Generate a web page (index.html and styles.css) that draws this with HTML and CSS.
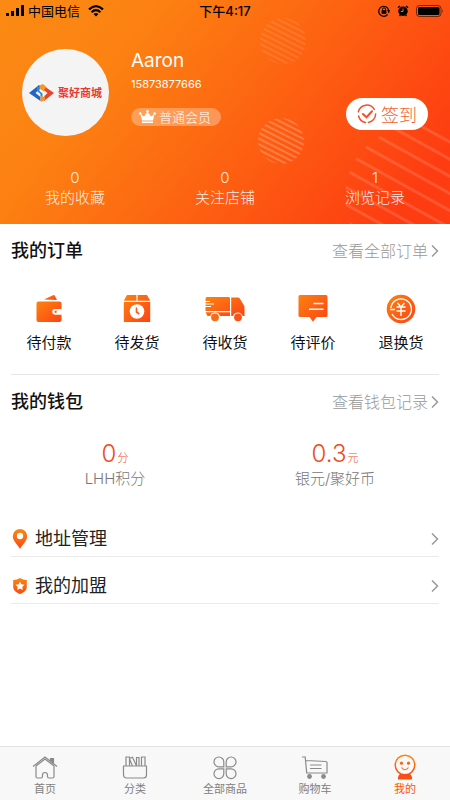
FILE: index.html
```html
<!DOCTYPE html>
<html lang="zh-CN">
<head>
<meta charset="utf-8">
<meta name="viewport" content="width=device-width, initial-scale=1">
<title>我的</title>
<link rel="stylesheet" href="styles.css">
</head>
<body>
<svg class="defs" width="0" height="0" aria-hidden="true">
  <defs>
    <linearGradient id="warm" x1="0" y1="0" x2="1" y2="1">
      <stop offset="0" stop-color="#fd820f"/>
      <stop offset="1" stop-color="#fb4415"/>
    </linearGradient>
    <linearGradient id="warmDown" x1="0" y1="0" x2="0" y2="1">
      <stop offset="0" stop-color="#fd860f"/>
      <stop offset="1" stop-color="#fb4a12"/>
    </linearGradient>
  </defs>
</svg>
<header class="hero">
  <svg class="hero-art" viewBox="0 0 450 224" preserveAspectRatio="xMaxYMin slice" aria-hidden="true">
    <defs>
      <pattern id="fine" width="5" height="5" patternUnits="userSpaceOnUse" patternTransform="rotate(27)">
        <rect width="5" height="2" fill="#fff"/>
      </pattern>
      <pattern id="bold" width="15" height="15" patternUnits="userSpaceOnUse" patternTransform="translate(0 11) rotate(29)">
        <rect width="15" height="3" fill="#fff"/>
      </pattern>
    </defs>
    <circle cx="283" cy="41" r="23" fill="url(#fine)" opacity=".1"/>
    <circle cx="281" cy="141" r="23" fill="url(#fine)" opacity=".22"/>
    <circle cx="416" cy="197" r="71" fill="url(#bold)" opacity=".13"/>
  </svg>
  <div class="status">
    <div class="status-side">
      <svg width="18" height="12" viewBox="0 0 18 12" aria-hidden="true"><path d="M0 8h3v3H0zM5 6h3v5H5zM10 3h3v8h-3zM15 0h3v11h-3z"/></svg>
      <span>中国电信</span>
      <svg class="wifi" width="16" height="12" viewBox="0 0 16 12" aria-hidden="true"><g fill="none" stroke="#000" stroke-width="2.2"><path d="M1 4.4Q8-2 15 4.4"/><path d="M3.6 7.2Q8 3.2 12.4 7.2"/></g><path d="M8 11.5 5.6 9Q8 7 10.4 9z"/></svg>
    </div>
    <span class="time">下午4:17</span>
    <div class="status-side status-right">
      <svg width="12" height="12" viewBox="0 0 12 12" aria-hidden="true"><path d="M10.6 5A5 5 0 1 0 9.600 9.500M10.800 5.500V8" fill="none" stroke="#000" stroke-width="1.200"/><path d="M9 5h3l-1.500 2.500z"/><rect x="3.600" y="5.200" width="4.800" height="3.600"/><path d="M4.500 5.500V4.300a1.500 1.500 0 0 1 3 0v1.200" fill="none" stroke="#000"/></svg>
      <svg width="12" height="12" viewBox="0 0 12 12" aria-hidden="true"><circle cx="6" cy="6.300" r="4.700"/><path d="M1 2.800 3 1M11 2.800 9 1M2.500 11l1-1M9.500 11l-1-1" stroke="#000" stroke-width="1.500"/><path d="M6 3.500v3H3.800" fill="none" stroke="#fb7010"/></svg>
      <svg width="28" height="12" viewBox="0 0 28 12" aria-hidden="true"><rect x=".5" y=".5" width="24.500" height="11" rx="3" fill="none" stroke="#000" stroke-opacity=".55"/><rect x="2" y="2" width="21.500" height="8" rx="1.500"/><path d="M26 4q1.600 2 0 4z" fill-opacity=".6"/></svg>
    </div>
  </div>
  <div class="profile">
    <div class="avatar">
      <svg width="25" height="18" viewBox="0 0 25 18" aria-hidden="true">
        <path d="M0 9 10 1l2.500 2L6.500 9l5 4v4z" fill="#2465c4"/>
        <path d="M25 9 15 17l-2.500-2L18.500 9l-5-4V1z" fill="#e8432c"/>
        <path d="M8 3h2.500v4l3 2.500v4l-2-1V10L8 7z" fill="#1f8de0"/>
        <path d="M10.500 1.500 14 0l4 3.500-2.500 1.500V8l-2-1.500-3-2z" fill="#f79620"/>
        <path d="M11.500 17v-5.500l3.500 2 1-2.500v4.500L12 18z" fill="#f79620"/>
      </svg>
      <span>聚好商城</span>
    </div>
    <div class="identity">
      <h1>Aaron</h1>
      <p>15873877666</p>
      <span class="level">
        <svg width="17" height="14" viewBox="0 0 17 14" aria-hidden="true"><g fill="#fff"><path d="M1.500 4 5 6.500 8.500 1.500 12 6.500 15.500 4 14 10.500H3zM3 11.500h11v1.500H3z"/><circle cx="1.300" cy="3.500" r="1.200"/><circle cx="8.500" cy="1.300" r="1.300"/><circle cx="15.700" cy="3.500" r="1.200"/></g></svg>
        普通会员
      </span>
    </div>
    <button class="checkin" type="button">
      <svg width="20" height="20" viewBox="0 0 22 22" fill="none" stroke="#f0512a" stroke-width="1.600" stroke-linecap="round" aria-hidden="true"><path d="M1.500 8.500A9.500 9.500 0 0 1 19 6M20.500 11A9.500 9.500 0 0 1 12.500 20.300M1.800 13.200a9.500 9.500 0 0 0 7.500 7.200"/><path d="m6.500 11 4 3.600L16.500 8" stroke-width="2.200"/></svg>
      签到
    </button>
  </div>
  <nav class="stats" aria-label="统计">
    <a href="#"><b>0</b>我的收藏</a>
    <a href="#"><b>0</b>关注店铺</a>
    <a href="#"><b>1</b>浏览记录</a>
  </nav>
</header>
<main>
  <section class="panel">
    <div class="panel-head">
      <h2>我的订单</h2>
      <a href="#">查看全部订单<svg width="8" height="14" viewBox="0 0 8 14" aria-hidden="true"><path d="m1 1.500 5.500 5.500L1 12.500"/></svg></a>
    </div>
    <nav class="orders" aria-label="订单">
      <a href="#">
        <svg width="26" height="28" viewBox="0 0 26 28" aria-hidden="true"><g fill="url(#warm)"><path d="M8 5.500 17 1.200a1.500 1.500 0 0 1 2 .7L21 6z"/><path d="M2.500 7.500h21A2 2 0 0 1 25.500 9v6h-6.500a2.700 2.700 0 0 0 0 5.500h6.500v5.500a2 2 0 0 1-2 2h-21a2 2 0 0 1-2-2V9.500a2 2 0 0 1 2-2z"/></g><path d="M26 15.200h-6.500a2.600 2.600 0 0 0 0 5.200H26z" fill="#fff"/><circle cx="19.600" cy="17.800" r="1.200" fill="#fb6a18"/></svg>
        待付款</a>
      <a href="#">
        <svg width="28" height="28" viewBox="0 0 28 28" aria-hidden="true"><path d="M4 1h9.400v5.700H.8zM14.600 1H24l3.200 5.700H14.600zM.8 8h26.400v20H.8z" fill="url(#warm)"/><circle cx="14" cy="17.500" r="7.300" fill="#fff"/><path d="M13.500 13.500v4.500l2.800 2" fill="none" stroke="#fb5c14" stroke-width="1.600"/></svg>
        待发货</a>
      <a href="#">
        <svg width="40" height="28" viewBox="0 0 40 28" aria-hidden="true"><path d="M2 3h21.500a1.500 1.500 0 0 1 1.500 1.500V17H.5V4.500A1.500 1.500 0 0 1 2 3zM26.200 3.500H33a2 2 0 0 1 1.800 1l4.200 7a3 3 0 0 1 .5 2V22h-1.800a5 5 0 0 0-9.600 0h-1.900zM.5 18.200H25V22H14.900a5.200 5.200 0 0 0-9.800 0H2.500z" fill="url(#warm)"/><circle cx="10" cy="23.300" r="3.900" fill="#fb6a14"/><circle cx="33" cy="23.300" r="3.900" fill="#fb5216"/><path d="M0 7.500h5M0 10h9M0 12.500h6" stroke="#fff" stroke-width="1.200"/></svg>
        待收货</a>
      <a href="#">
        <svg width="30" height="28" viewBox="0 0 30 28" aria-hidden="true"><path d="M2 1h26a1.500 1.500 0 0 1 1.500 1.500v19a1.500 1.500 0 0 1-1.500 1.500h-9.500L15 27.800 11.500 23H2a1.500 1.500 0 0 1-1.500-1.500v-19A1.500 1.500 0 0 1 2 1z" fill="url(#warm)"/><path d="M15.500 9.500h10M11 15.200h14.500" stroke="#fff" stroke-width="1.500"/></svg>
        待评价</a>
      <a href="#">
        <svg width="30" height="30" viewBox="0 0 30 30" aria-hidden="true"><circle cx="15" cy="15" r="14.300" fill="url(#warm)"/><g fill="none" stroke="#fff" stroke-width="1.400"><path d="M4 15.500h5M4.900 14A10.300 10.300 0 1 1 6 20"/><path d="M10.500 13h9M10.500 17h9M11.500 9l3.500 4 3.500-4M15 13v9"/></g></svg>
        退换货</a>
    </nav>
  </section>
  <section class="panel wallet-panel">
    <div class="panel-head">
      <h2>我的钱包</h2>
      <a href="#">查看钱包记录<svg width="8" height="14" viewBox="0 0 8 14" aria-hidden="true"><path d="m1 1.500 5.500 5.500L1 12.500"/></svg></a>
    </div>
    <div class="wallet">
      <div><p class="amount">0<small>分</small></p><p>LHH积分</p></div>
      <div><p class="amount">0.3<small>元</small></p><p>银元/聚好币</p></div>
    </div>
  </section>
  <nav class="links" aria-label="更多">
    <a href="#">
      <svg width="18" height="20" viewBox="0 0 18 20" aria-hidden="true"><path d="M9 0a7.200 7.200 0 0 1 7.200 7.200C16.200 12 11 16 9 20 7 16 1.800 12 1.800 7.200A7.200 7.200 0 0 1 9 0z" fill="url(#warmDown)"/><circle cx="9" cy="7" r="3.200" fill="#fff"/></svg>
      <span>地址管理</span>
      <svg class="arrow" width="8" height="14" viewBox="0 0 8 14" aria-hidden="true"><path d="m1 1.500 5.500 5.500L1 12.500"/></svg>
    </a>
    <a href="#">
      <svg width="18" height="18" viewBox="0 0 18 18" aria-hidden="true"><path d="M9 1q3 2 6.800 2v6.500c0 4-3 6-6.800 7.500-3.800-1.500-6.800-3.500-6.800-7.500V3Q6 3 9 1z" fill="url(#warmDown)"/><path d="m9 4.500 1.400 2.800 3.100.4-2.200 2.200.5 3.100L9 11.500 6.200 13l.5-3.100-2.200-2.200 3.100-.4z" fill="#fff"/></svg>
      <span>我的加盟</span>
      <svg class="arrow" width="8" height="14" viewBox="0 0 8 14" aria-hidden="true"><path d="m1 1.500 5.500 5.500L1 12.500"/></svg>
    </a>
  </nav>
</main>
<nav class="tabs" aria-label="主导航">
  <a href="#">
    <svg width="26" height="26" viewBox="0 0 26 26" aria-hidden="true"><path d="M1 12.500 13 3l12 9.500M4 12v10.500a1.500 1.500 0 0 0 1.500 1.500H9a1.500 1.500 0 0 0 1.500-1.500V21a2.500 2.500 0 0 1 5 0v1.500A1.500 1.500 0 0 0 17 24h3.500a1.500 1.500 0 0 0 1.500-1.500V12M4 12l9-7 9 7"/><path d="M18.500 4.500h3v4.500l-3-2.300z" fill="#8a8a8a"/></svg>
    首页</a>
  <a href="#">
    <svg width="26" height="26" viewBox="0 0 26 26" aria-hidden="true"><path d="M1.500 12h23v9a3 3 0 0 1-3 3h-17a3 3 0 0 1-3-3zM4 12V3h3.500v9M7.500 4.500l3-1.300L14.500 12M7.500 5l3 7M14.500 12V3.500h2.500V12M19.500 12V3H23v9"/></svg>
    分类</a>
  <a href="#">
    <svg width="26" height="26" viewBox="0 0 26 26" aria-hidden="true"><path d="M11.800 12.800H7A4.900 4.900 0 1 1 11.800 8zM14.200 12.800H19A4.900 4.900 0 1 0 14.200 8zM11.800 14.800H7a4.900 4.900 0 1 0 4.800 4.800zM14.200 14.800H19a4.900 4.900 0 1 1-4.800 4.800z"/></svg>
    全部商品</a>
  <a href="#">
    <svg width="28" height="26" viewBox="0 0 28 26" aria-hidden="true"><path d="M1 3h3.200l1.500 16H26V8.500a1 1 0 0 0-1-1L4.500 6.500M9 11h11.500M9 14.500h11.500"/><g fill="#8a8a8a" stroke="none"><circle cx="8.500" cy="22.500" r="2.400"/><circle cx="22.500" cy="22.500" r="2.400"/></g></svg>
    购物车</a>
  <a href="#" class="active" aria-current="page">
    <svg width="26" height="26" viewBox="0 0 26 26" aria-hidden="true"><path d="M8 20h10q2.500 2 2 5.500H6Q5.500 22 8 20z" fill="#fb4f12" stroke="none"/><circle cx="13" cy="11" r="9.800" fill="#f8f8f8" stroke="url(#warmDown)" stroke-width="1.500"/><circle cx="9.500" cy="9.200" r="1.600" fill="#fb6512" stroke="none"/><circle cx="16.500" cy="9.200" r="1.600" fill="#fb6512" stroke="none"/><path d="M9.500 13.500q3.500 4.500 7 0" stroke="#fb6512"/></svg>
    我的</a>
</nav>
</body>
</html>
```
FILE: styles.css
```css
* {
  box-sizing: border-box;
}

body {
  display: flex;
  flex-direction: column;
  min-height: 100vh;
  margin: 0;
  background: #fff;
  color: #111;
  font-family: Inter, "Noto Sans CJK SC", sans-serif;
  font-size: 15px;
  line-height: 20px;
}

h1,
h2,
p {
  margin: 0;
}

a {
  color: inherit;
  text-decoration: none;
}

svg {
  flex: none;
}

.defs {
  position: absolute;
}

/* Header */

.hero {
  position: relative;
  padding-bottom: 16px;
  background: linear-gradient(128deg, #fb8a14 0%, #fc8212 25%, #fd6011 58%, #fd3d11 90%);
  color: #fff;
}

.hero-art {
  position: absolute;
  inset: 0;
  width: 100%;
  height: 100%;
}

.status,
.profile,
.stats {
  position: relative;
}

.status {
  display: flex;
  align-items: center;
  height: 22px;
  padding: 0 6px;
  color: #000;
  font-size: 13px;
}

.status-side {
  display: flex;
  flex: 1;
  align-items: center;
  gap: 4px;
}

.wifi {
  margin-left: 4px;
}

.status-right {
  justify-content: flex-end;
  gap: 7px;
}

.time {
  font-weight: 500;
}

.profile {
  display: flex;
  margin-top: 27px;
  padding: 0 22px;
}

.avatar {
  display: flex;
  align-items: center;
  justify-content: center;
  gap: 4px;
  width: 87px;
  height: 87px;
  border-radius: 50%;
  background: #f4f4f4;
  color: #e83a34;
  font-size: 11px;
  font-weight: 700;
  white-space: nowrap;
}

.identity {
  flex: 1;
  margin-left: 22px;
}

.identity h1 {
  font-size: 19px;
  font-weight: 400;
  line-height: 24px;
}

.identity p {
  margin: 3px 0 16px;
  font-size: 11px;
  line-height: 16px;
}

.level {
  display: flex;
  align-items: center;
  gap: 3px;
  width: max-content;
  height: 18px;
  padding: 0 10px 0 8px;
  border-radius: 9px;
  background: rgba(255, 255, 255, 0.3);
  font-size: 13px;
  font-weight: 300;
}

.checkin {
  display: flex;
  align-items: center;
  align-self: flex-end;
  justify-content: center;
  gap: 4px;
  width: 82px;
  height: 32px;
  margin-bottom: 6px;
  padding: 0;
  border: 0;
  border-radius: 16px;
  background: #fff;
  color: #f0602f;
  font-family: inherit;
  font-size: 18px;
  font-weight: 300;
}

.stats {
  display: flex;
  margin-top: 32px;
}

.stats a {
  flex: 1;
  color: rgba(255, 255, 255, 0.9);
  font-weight: 300;
  text-align: center;
}

.stats b {
  display: block;
  font-weight: 300;
}

/* Sections */

main {
  flex: 1;
}

.panel {
  margin: 0 11px;
  padding-top: 15px;
}

.panel-head {
  display: flex;
  align-items: center;
  justify-content: space-between;
}

.panel-head h2 {
  font-size: 18px;
  font-weight: 500;
  line-height: 24px;
}

.panel-head a {
  display: flex;
  align-items: center;
  gap: 3px;
  color: #999;
  font-size: 16px;
  font-weight: 300;
}

.panel-head path,
.arrow path {
  fill: none;
  stroke: #999;
  stroke-width: 1.5;
}

.orders {
  display: flex;
  margin: 29px -6px 0;
  padding-bottom: 21px;
}

.orders a {
  display: flex;
  flex: 1;
  flex-direction: column;
  align-items: center;
  justify-content: space-between;
  height: 61px;
  padding-top: 2px;
}

.wallet-panel {
  border-top: 1px solid #e6e6e6;
}

.wallet {
  display: flex;
  margin: 25px -6px 21px;
  color: #777;
  font-weight: 300;
  text-align: center;
}

.wallet div {
  flex: 1;
}

.wallet .amount {
  color: #f04a20;
  font-size: 24px;
  line-height: 30px;
}

.amount small {
  margin-left: 1px;
  font-size: 11px;
  font-weight: 300;
  line-height: 1;
}

.links {
  margin: 0 11px;
}

.links a {
  display: flex;
  align-items: center;
  gap: 6px;
  padding: 17px 0 5px;
  border-bottom: 1px solid #ebebeb;
  color: #222;
  font-size: 18px;
  line-height: 24px;
}

.links span {
  flex: 1;
}

/* Bottom navigation */

.tabs {
  position: sticky;
  bottom: 0;
  display: flex;
  border-top: 1px solid #e3e3e3;
  background: #f8f8f8;
  color: #808080;
  font-size: 11px;
  line-height: 14px;
}

.tabs a {
  display: flex;
  flex: 1;
  flex-direction: column;
  align-items: center;
  gap: 2px;
  padding: 7px 0 4px;
}

.tabs svg {
  fill: none;
  stroke: #8a8a8a;
  stroke-width: 1.2;
}

.tabs .active {
  color: #fb5512;
}
```
